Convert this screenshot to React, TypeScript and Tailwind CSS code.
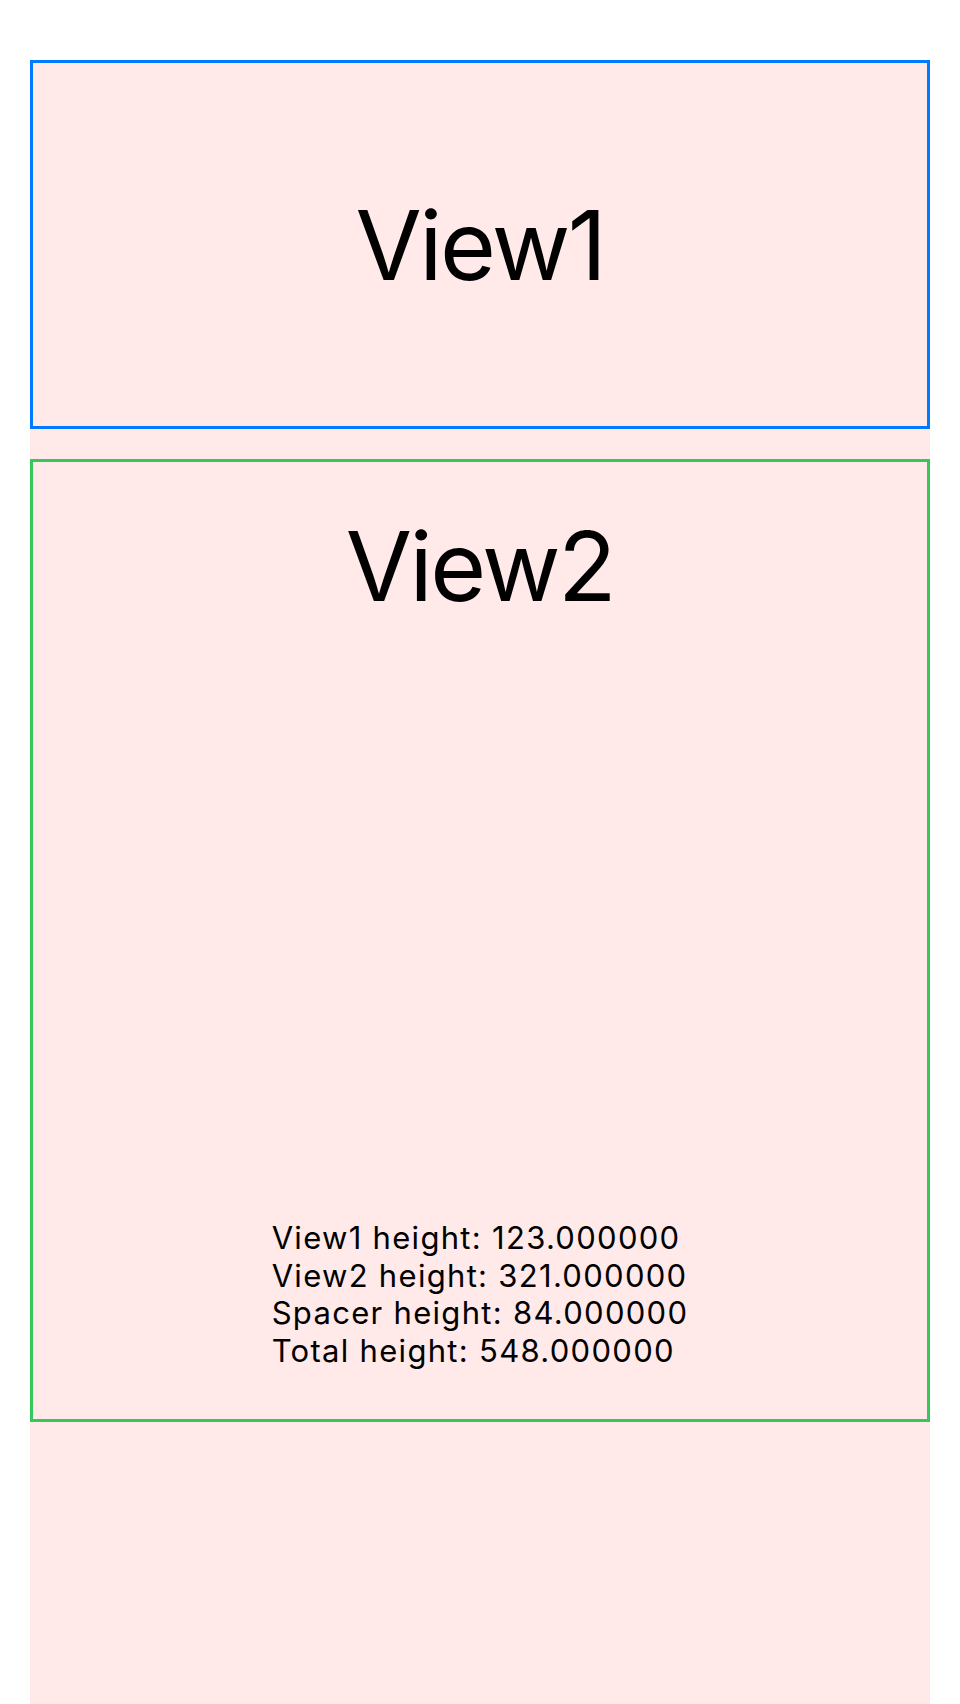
export default function App() {
  return (
    <div className="min-h-screen w-full bg-white px-[30px] pt-[60px]" style={{ fontFamily: "Inter, 'Noto Sans', sans-serif" }}>
      <div className="flex h-[1644px] flex-col gap-[30px] bg-[#ffe9e9]">
        <div className="flex h-[369px] items-center justify-center border-[3px] border-[#007aff]">
          <span className="text-[96px] leading-none tracking-[-2.5px] text-black">View1</span>
        </div>
        <div className="flex h-[963px] flex-col items-center justify-between border-[3px] border-[#34c759] pb-[50px] pt-[56px]">
          <span className="text-[96px] leading-none tracking-[-2.5px] text-black">View2</span>
          <div className="flex flex-col items-start text-[31px] leading-[37.5px] tracking-[1.3px] text-black">
            <span>View1 height: 123.000000</span>
            <span>View2 height: 321.000000</span>
            <span>Spacer height: 84.000000</span>
            <span>Total height: 548.000000</span>
          </div>
        </div>
      </div>
    </div>
  );
}
